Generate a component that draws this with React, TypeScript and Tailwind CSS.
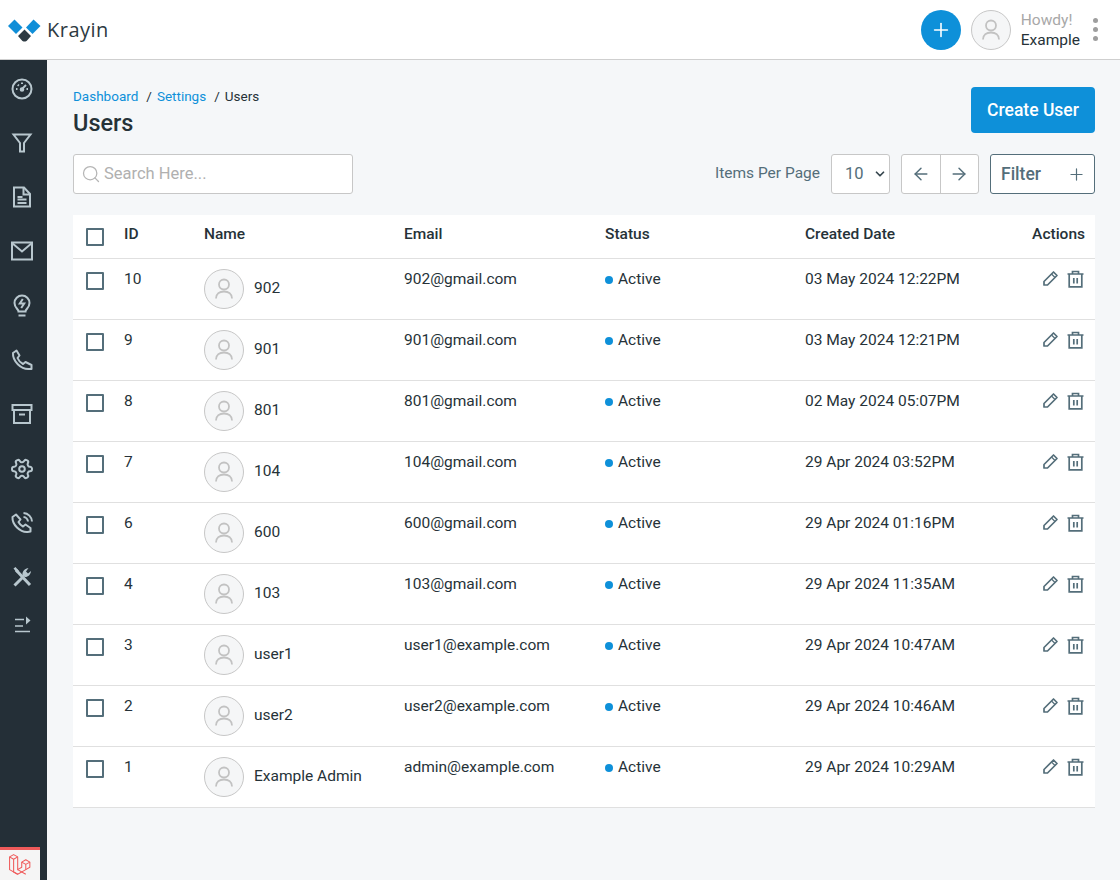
import { ArrowLeft, ArrowRight, Plus, Search, ChevronDown } from "lucide-react";
import type { ReactNode } from "react";

type User = { id: number; name: string; email: string; created: string };

const users: User[] = [
    { id: 10, name: "902", email: "902@gmail.com", created: "03 May 2024 12:22PM" },
    { id: 9, name: "901", email: "901@gmail.com", created: "03 May 2024 12:21PM" },
    { id: 8, name: "801", email: "801@gmail.com", created: "02 May 2024 05:07PM" },
    { id: 7, name: "104", email: "104@gmail.com", created: "29 Apr 2024 03:52PM" },
    { id: 6, name: "600", email: "600@gmail.com", created: "29 Apr 2024 01:16PM" },
    { id: 4, name: "103", email: "103@gmail.com", created: "29 Apr 2024 11:35AM" },
    { id: 3, name: "user1", email: "user1@example.com", created: "29 Apr 2024 10:47AM" },
    { id: 2, name: "user2", email: "user2@example.com", created: "29 Apr 2024 10:46AM" },
    { id: 1, name: "Example Admin", email: "admin@example.com", created: "29 Apr 2024 10:29AM" },
];

const navIcons: ReactNode[] = [
    <>
        <circle cx="12" cy="12" r="9.500" />
        <path d="M12 12l4-4" />
        <path d="M6 12h1.500M7.800 7.800l1 1M12 5.500V7M16.500 12H18" />
        <circle cx="12" cy="12.500" r="1.300" fill="currentColor" />
    </>,
    <path d="M3.500 3.500h17l-6.500 8.500v8.500h-4V12z" />,
    <>
        <path d="M4 2.500h10L20 9v12.500H4z" />
        <path d="M13.500 2.500V9.500h6.500M7.500 12h5M7.500 14.500h9M7.500 18h9" />
    </>,
    <>
        <path d="M2 3.500h20v17H2z" />
        <path d="M2 4l10 8.500L22 4" />
    </>,
    <>
        <path d="M8.500 17.500c0-2.500-4-3.500-4-8.500a7.500 7.500 0 0 1 15 0c0 5-4 6-4 8.500z" />
        <path d="M8.500 21.500h7" />
        <path d="M12.800 5l-3 4.500h4.400l-3 4.500" />
    </>,
    <path d="M6.500 2.500L3 5c-.5 8 8 16.500 16 16h2.500v-4l-6-3-2.500 2c-2-1-4.500-3.500-5.500-6l2-2.500z" strokeLinejoin="round" />,
    <>
        <path d="M2.500 3h19v5h-19z" />
        <path d="M4 8v13h16V8" />
        <path d="M9 12.500h6" />
    </>,
    <>
        <circle cx="12" cy="12" r="2.800" />
        <path
            transform="rotate(90 12 12)"
            d="M12.220 2h-.44a2 2 0 0 0-2 2v.18a2 2 0 0 1-1 1.730l-.43.25a2 2 0 0 1-2 0l-.15-.08a2 2 0 0 0-2.730.73l-.22.38a2 2 0 0 0 .73 2.730l.15.1a2 2 0 0 1 1 1.720v.51a2 2 0 0 1-1 1.740l-.15.09a2 2 0 0 0-.73 2.730l.22.38a2 2 0 0 0 2.730.73l.15-.08a2 2 0 0 1 2 0l.43.25a2 2 0 0 1 1 1.730V20a2 2 0 0 0 2 2h.44a2 2 0 0 0 2-2v-.18a2 2 0 0 1 1-1.730l.43-.25a2 2 0 0 1 2 0l.15.08a2 2 0 0 0 2.730-.73l.22-.39a2 2 0 0 0-.73-2.730l-.15-.08a2 2 0 0 1-1-1.740v-.5a2 2 0 0 1 1-1.740l.15-.09a2 2 0 0 0 .73-2.730l-.22-.38a2 2 0 0 0-2.730-.73l-.15.08a2 2 0 0 1-2 0l-.43-.25a2 2 0 0 1-1-1.730V4a2 2 0 0 0-2-2z"
        />
    </>,
    <>
        <path d="M6 3.500L2.500 6c-.5 7.500 7.500 15.500 15 15l3-.5v-3.500l-5-3.500-2.500 2c-2-1-3.500-2.500-4.500-4.500l2-2.500z" strokeLinejoin="round" />
        <path d="M13.500 2c4.700.3 8.200 3.800 8.500 8.500M13.500 6c2.300.2 4.300 2.200 4.500 4.500" />
    </>,
    <>
        <path d="M4.500 20.500l9-9M6 5l14 15" strokeWidth="3" />
        <path d="M3.500 3.500L5.500 2 9 6 7 8z" fill="currentColor" stroke="none" />
        <path d="M13 11.500c-1.500-3 0-7.500 5.500-8.500L16 6.500 18 8.500l3-2.500c-.5 5-4.500 7-8 5.500z" fill="currentColor" stroke="none" />
    </>,
    <>
        <path d="M5 6.500h9M5 13h8M5 18.500h15" strokeWidth="1.600" />
        <path d="M16 3.500l4.500 4-4.500 4z" fill="currentColor" stroke="none" />
    </>,
];

function Avatar() {
    return (
        <div className="w-10 h-10 shrink-0 rounded-full border border-[#c7c7c7] bg-[#f5f6f7]">
            <svg viewBox="0 0 38 38" className="w-[38px] h-[38px] text-[#c2c2c2]" fill="none" stroke="currentColor" strokeWidth="1.800">
                <circle cx="19" cy="14.500" r="5" />
                <path d="M11 28.500c0-4.500 3.500-7 8-7s8 2.500 8 7" />
            </svg>
        </div>
    );
}

function Checkbox() {
    return <div className="w-[18px] h-[18px] border-2 border-[#546e7a] rounded-[1px] bg-white" />;
}

export default function App() {
    return (
        <div className="w-[1120px] h-[880px] overflow-hidden flex flex-col bg-[#f5f7f9] text-[#263238] text-[15.500px] font-['Roboto',sans-serif]">
            <header className="h-[60px] shrink-0 flex items-center bg-white border-b border-[#cfcfcf] pl-2 pr-[22px]">
                <svg viewBox="0 0 33 24" className="w-[33px] h-[24px] mt-[3px]">
                    <path d="M0 7L6.500 0.500 14.500 8.500 8 15z" fill="#0f8ed8" />
                    <path d="M18 8.500L25.500 0.500 32.500 7 24.500 15z" fill="#0f8ed8" />
                    <path d="M10 17L16.500 10.500 23 17l-3.500 4c-1.700 2-4.300 2-6 0z" fill="#2d3a42" />
                </svg>
                <span className="ml-[6px] text-[20px] tracking-[0.5px] text-[#2d3a42] font-['Open_Sans',sans-serif]">Krayin</span>
                <div className="ml-auto flex items-center">
                    <button className="w-10 h-10 rounded-full bg-[#0e90d9] text-white flex items-center justify-center">
                        <Plus size={22} strokeWidth={1.750} />
                    </button>
                    <div className="ml-[10px]"><Avatar /></div>
                    <div className="ml-[10px] leading-[20px]">
                        <div className="text-[#a8a8a8]">Howdy!</div>
                        <div>Example</div>
                    </div>
                    <div className="ml-[13px] flex flex-col gap-[4px]">
                        <span className="w-[5px] h-[5px] rounded-full bg-[#9e9e9e]" />
                        <span className="w-[5px] h-[5px] rounded-full bg-[#9e9e9e]" />
                        <span className="w-[5px] h-[5px] rounded-full bg-[#9e9e9e]" />
                    </div>
                </div>
            </header>

            <div className="flex-1 flex min-h-0 relative">
                <aside className="w-[47px] shrink-0 bg-[#242f37] flex flex-col items-center pt-[16.500px] pr-[3px] gap-[30.300px]">
                    {navIcons.map((icon, i) => (
                        <svg key={i} viewBox="0 0 24 24" className={`w-[24px] h-[24px] text-[#b8c7ce] ${i === 10 ? "-mt-[6px]" : ""}`} fill="none" stroke="currentColor" strokeWidth="2">
                            {icon}
                        </svg>
                    ))}
                </aside>

                <div className="absolute left-0 bottom-0 w-[40px] h-[33px] bg-[#f5f5f5] border-t-[3px] border-[#ef5a5a] flex items-center justify-center">
                    <svg viewBox="1 2 19 19" className="w-[22px] h-[22px] text-[#ef5a5a]" fill="none" stroke="currentColor" strokeWidth="0.900" strokeLinejoin="round">
                        <path d="M1.500 4.500L5 2.500l3.500 2v11L12 13.500V9l3.500-2 3.500 2v4.500l-3.500 2-7 4-7-4z" />
                        <path d="M1.500 4.500L5 6.500l3.500-2M5 6.500v11l3.500 2M8.500 15.500l7 4M12 9l3.500 2L19 9M15.500 11v4.500" />
                    </svg>
                </div>

                <main className="flex-1 pl-[26px] pr-[25px] pt-[27px]">
                    <div className="flex justify-between items-start">
                        <div>
                            <div className="text-[13.500px] leading-[18px] flex">
                                <span className="text-[#0e90d9]">Dashboard</span>
                                <span className="ml-2">/</span>
                                <span className="ml-[5px] text-[#0e90d9]">Settings</span>
                                <span className="ml-2">/</span>
                                <span className="ml-[5px]">Users</span>
                            </div>
                            <h1 className="mt-[4px] text-[23.500px] leading-[28px] font-medium">Users</h1>
                        </div>
                        <button className="h-[46px] w-[124px] rounded bg-[#0e90d9] text-white text-[17.500px] font-medium">Create User</button>
                    </div>

                    <div className="mt-[17px] flex items-center">
                        <div className="w-[280px] h-[40px] rounded-[3px] border border-[#c7c7c7] bg-white flex items-center pl-[7px]">
                            <Search size={20} className="text-[#b5b5b5]" strokeWidth={1.500} />
                            <span className="ml-[3px] text-[#b0b0b0] text-[16.500px]">Search Here...</span>
                        </div>
                        <span className="ml-auto text-[#546e7a]">Items Per Page</span>
                        <div className="ml-[11px] w-[59px] h-[40px] rounded-[3px] border border-[#c7c7c7] bg-white flex items-center pl-[13px] text-[#546e7a] text-[16.500px]">
                            10
                            <ChevronDown size={14} strokeWidth={3} className="ml-[9px] text-[#37474f]" />
                        </div>
                        <div className="ml-[11px] w-[78px] h-[40px] rounded-[3px] border border-[#c7c7c7] bg-white flex text-[#546e7a]">
                            <div className="flex-1 flex items-center justify-center border-r border-[#c7c7c7]"><ArrowLeft size={20} strokeWidth={1.750} /></div>
                            <div className="flex-1 flex items-center justify-center"><ArrowRight size={20} strokeWidth={1.750} /></div>
                        </div>
                        <div className="ml-[11px] w-[105px] h-[40px] rounded-[3px] border border-[#546e7a] bg-white flex items-center justify-between pl-[10px] pr-[8px] text-[#546e7a]">
                            <span className="text-[17.500px] font-medium">Filter</span>
                            <Plus size={19} strokeWidth={1.500} />
                        </div>
                    </div>

                    <div className="mt-[21px] bg-white">
                        <div className="grid grid-cols-[51px_80px_200px_201px_200px_1fr] h-[44px] items-center border-b border-[#e0e0e0] font-medium pb-[4px]">
                            <div className="pl-[13px] pt-[4px]"><Checkbox /></div>
                            <div>ID</div>
                            <div>Name</div>
                            <div>Email</div>
                            <div>Status</div>
                            <div className="flex justify-between pr-[10px]"><span>Created Date</span><span>Actions</span></div>
                        </div>
                        {users.map((u) => (
                            <div key={u.id} className="grid grid-cols-[51px_80px_200px_201px_200px_1fr] h-[61px] border-b border-[#e0e0e0] pt-[10px] leading-[20px]">
                                <div className="pl-[13px] pt-[3px]"><Checkbox /></div>
                                <div>{u.id}</div>
                                <div className="flex items-center h-[40px]">
                                    <Avatar />
                                    <span className="ml-[10px] mb-[2px]">{u.name}</span>
                                </div>
                                <div>{u.email}</div>
                                <div className="flex items-center h-[20px]">
                                    <span className="w-[8px] h-[8px] rounded-full bg-[#0e90d9] mr-[5px] mt-[1px]" />
                                    Active
                                </div>
                                <div className="flex justify-between pr-[11px]">
                                    <span>{u.created}</span>
                                    <span className="flex gap-[8px] text-[#546e7a] items-start pt-[1px]">
                                        <svg viewBox="0 0 17 17" className="w-[17px] h-[17px]" fill="none" stroke="currentColor" strokeWidth="1.700" strokeLinejoin="round">
                                            <path d="M2 11.500L11.500 2 15 5.500 5.500 15H2z" />
                                            <path d="M9.500 4l3.500 3.500" strokeWidth="1.200" />
                                        </svg>
                                        <svg viewBox="0 0 17 18" className="w-[17px] h-[18px]" fill="none" stroke="currentColor" strokeWidth="1.700">
                                            <path d="M0.500 4h16M5.500 4V1.500h6V4" />
                                            <path d="M2.200 4v12.800h12.600V4" />
                                            <path d="M6.800 8v5.500M10.200 8v5.500" />
                                        </svg>
                                    </span>
                                </div>
                            </div>
                        ))}
                    </div>
                </main>
            </div>
        </div>
    );
}
